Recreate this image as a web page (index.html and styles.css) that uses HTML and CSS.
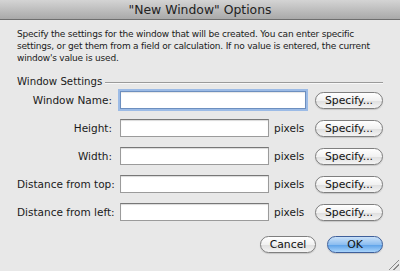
FILE: index.html
```html
<!DOCTYPE html>
<html lang="en">
<head>
    <meta charset="UTF-8">
    <title>"New Window" Options</title>
    <link rel="stylesheet" href="styles.css">
</head>
<body>
    <div class="dialog">
        <div class="titlebar">"New Window" Options</div>
        <div class="content">
            <p class="intro">Specify the settings for the window that will be created. You can enter specific settings, or get them from a field or calculation. If no value is entered, the current window's value is used.</p>
            <div class="group-title">
                <span>Window Settings</span>
                <span class="rule"></span>
            </div>
            <div class="fields">
                <label class="label">Window Name:</label>
                <input class="field field-wide focused" type="text">
                <button class="btn">Specify...</button>

                <label class="label">Height:</label>
                <input class="field" type="text">
                <span class="unit">pixels</span>
                <button class="btn">Specify...</button>

                <label class="label">Width:</label>
                <input class="field" type="text">
                <span class="unit">pixels</span>
                <button class="btn">Specify...</button>

                <label class="label">Distance from top:</label>
                <input class="field" type="text">
                <span class="unit">pixels</span>
                <button class="btn">Specify...</button>

                <label class="label">Distance from left:</label>
                <input class="field" type="text">
                <span class="unit">pixels</span>
                <button class="btn">Specify...</button>
            </div>
            <div class="actions">
                <button class="btn btn-action">Cancel</button>
                <button class="btn btn-action btn-default">OK</button>
            </div>
        </div>
        <div class="grip"></div>
    </div>
</body>
</html>
```

FILE: styles.css
```css
body {
    margin: 0;
    padding: 0;
    font-family: "DejaVu Sans", sans-serif;
    color: #1a1a1a;
    background-color: #e8e8e8;
}

.dialog {
    position: relative;
    width: 400px;
    height: 271px;
    background-color: #e8e8e8;
    overflow: hidden;
}

.titlebar {
    height: 20px;
    line-height: 20px;
    text-align: center;
    font-size: 12.4px;
    color: #222;
    background: linear-gradient(#d4d4d4, #a9a9a9);
    border-bottom: 1px solid #6e6e6e;
    box-sizing: border-box;
}

.content {
    padding: 0 17px;
}

.intro {
    margin: 8px 0 0 0;
    font-size: 9px;
    letter-spacing: -0.2px;
    line-height: 12px;
}

.group-title {
    display: flex;
    align-items: center;
    margin-top: 10px;
    font-size: 10.2px;
    height: 14px;
}

.rule {
    flex: 1;
    height: 1px;
    margin: 4px 0 0 3px;
    background-color: #9a9a9a;
    border-bottom: 1px solid #f8f8f8;
}

.fields {
    display: grid;
    grid-template-columns: 103px 149px 46px 68px;
    grid-auto-rows: 28px;
    align-items: center;
    margin-top: -2px;
    font-size: 10.5px;
}

.label {
    grid-column: 1;
    text-align: right;
    padding-right: 8px;
    white-space: nowrap;
}

.field {
    width: 149px;
    height: 18px;
    box-sizing: border-box;
    margin: 0;
    border: 1px solid #9b9b9b;
    border-top-color: #777;
    background-color: #fff;
    box-shadow: inset 0 1px 1px rgba(0, 0, 0, 0.15);
    font-family: inherit;
}

.field-wide {
    grid-column: 2 / 4;
    width: 186px;
}

.focused {
    border: 1px solid #6d8fbf;
    box-shadow: 0 0 0 2px #9cbbe6, inset 0 1px 1px rgba(0, 0, 0, 0.1);
}

.unit {
    padding-left: 5px;
}

.btn {
    grid-column: 4;
    height: 17px;
    padding: 0;
    margin: 0;
    border: 1px solid #7f7f7f;
    border-radius: 9px;
    background: linear-gradient(#ffffff, #f1f1f1 50%, #dedede 51%, #f4f4f4);
    font-family: "DejaVu Sans", sans-serif;
    font-size: 10.8px;
    color: #111;
    box-shadow: 0 1px 1px rgba(0, 0, 0, 0.15);
}

.actions {
    display: flex;
    justify-content: flex-end;
    gap: 11px;
    margin-top: 10px;
}

.btn-action {
    width: 56px;
}

.btn-default {
    border-color: #3e5f9a;
    background: linear-gradient(#c9e0f8, #8dbef0 50%, #5aa0e8 51%, #a9d4fb);
}

/* resize grip in the corner */
.grip {
    position: absolute;
    right: 1px;
    bottom: 1px;
    width: 10px;
    height: 10px;
    background: linear-gradient(135deg, transparent 45%, #8a8a8a 46%, #8a8a8a 53%, transparent 54%, transparent 68%, #8a8a8a 69%, #8a8a8a 76%, transparent 77%);
}
```
